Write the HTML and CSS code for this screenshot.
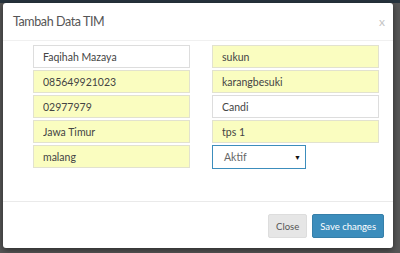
FILE: index.html
```html
<!DOCTYPE html>
<html lang="id">
<head>
    <meta charset="UTF-8">
    <title>Tambah Data TIM</title>
    <link rel="stylesheet" href="styles.css">
</head>
<body>
    <div class="backdrop">
        <div class="modal">
            <div class="modal-header">
                <h4 class="modal-title">Tambah Data TIM</h4>
                <button class="close">x</button>
            </div>
            <div class="modal-body">
                <div class="form-grid">
                    <input class="form-control" type="text" value="Faqihah Mazaya">
                    <input class="form-control autofill" type="text" value="sukun">
                    <input class="form-control autofill" type="text" value="085649921023">
                    <input class="form-control autofill" type="text" value="karangbesuki">
                    <input class="form-control autofill" type="text" value="02977979">
                    <input class="form-control" type="text" value="Candi">
                    <input class="form-control autofill" type="text" value="Jawa Timur">
                    <input class="form-control autofill" type="text" value="tps 1">
                    <input class="form-control autofill" type="text" value="malang">
                    <div class="select-box">
                        <span>Aktif</span>
                        <span class="caret">▼</span>
                    </div>
                </div>
            </div>
            <div class="modal-footer">
                <button class="btn btn-default">Close</button>
                <button class="btn btn-primary">Save changes</button>
            </div>
        </div>
    </div>
</body>
</html>
```

FILE: styles.css
```css
body {
    margin: 0;
    background-color: #565656;
    font-family: Lato, "Open Sans", sans-serif;
}

.backdrop {
    border-top: 3px solid #27343e;
    height: 250px;
    padding-left: 3px;
}

.modal {
    width: 390px;
    height: 245px;
    background-color: #fff;
    border-radius: 3px;
    box-shadow: 0 2px 6px rgba(0, 0, 0, 0.5);
    display: flex;
    flex-direction: column;
}

.modal-header {
    height: 37px;
    border-bottom: 1px solid #f0f0f0;
    display: flex;
    align-items: center;
    justify-content: space-between;
    padding: 0 8px 0 10px;
}

.modal-title {
    margin: 0;
    font-size: 12.5px;
    font-weight: normal;
    letter-spacing: -0.4px;
    color: #555;
}

.close {
    background: none;
    border: none;
    padding: 0;
    font-family: inherit;
    font-size: 12px;
    color: #c4c4c4;
}

.modal-body {
    height: 161px;
    box-sizing: border-box;
    padding: 4px 14px 0 30px;
    border-bottom: 1px solid #eaeaea;
}

.form-grid {
    display: grid;
    grid-template-columns: 157px 167px;
    column-gap: 22px;
    row-gap: 2px;
}

.form-control {
    height: 23px;
    box-sizing: border-box;
    border: 1px solid #ddd;
    padding: 0 9px;
    font-family: inherit;
    font-size: 10.5px;
    color: #444;
    background-color: #fff;
    outline: none;
}

.form-control.autofill {
    background-color: #fafdc0;
    border-color: #e2e2cf;
}

.select-box {
    width: 94px;
    height: 24px;
    box-sizing: border-box;
    border: 1px solid #3c8dbc;
    display: flex;
    align-items: center;
    justify-content: space-between;
    padding: 0 4px 0 11px;
    font-size: 10.5px;
    color: #666;
}

.caret {
    font-size: 7px;
    color: #111;
}

.modal-footer {
    display: flex;
    justify-content: flex-end;
    gap: 5px;
    padding: 12px 9px 0 0;
}

.btn {
    height: 24px;
    border-radius: 2px;
    font-family: inherit;
    font-size: 9.5px;
    padding: 0 7px;
}

.btn-default {
    background-color: #e6e6e6;
    border: 1px solid #ddd;
    color: #555;
}

.btn-primary {
    background-color: #3c8dbc;
    border: 1px solid #367fa9;
    color: #fff;
}
```
